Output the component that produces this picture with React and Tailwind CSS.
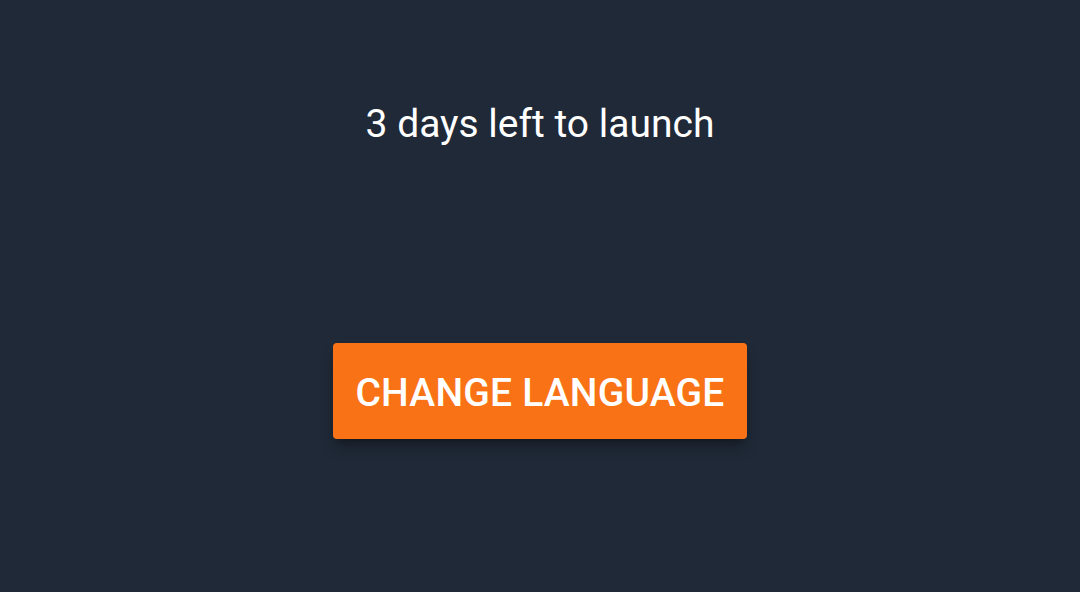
export default function App() {
  return (
    <div className="min-h-screen w-full bg-[#1f2937] flex flex-col items-center pt-[104px] font-['Roboto',sans-serif] text-white">
      <h1 className="text-[39px] leading-10 font-normal">3 days left to launch</h1>
      <button className="mt-[199px] h-[96px] px-[22px] pt-1 rounded bg-[#f97316] text-[39px] leading-10 font-medium tracking-[0.2px] shadow-lg shadow-black/30">
        CHANGE LANGUAGE
      </button>
    </div>
  );
}
